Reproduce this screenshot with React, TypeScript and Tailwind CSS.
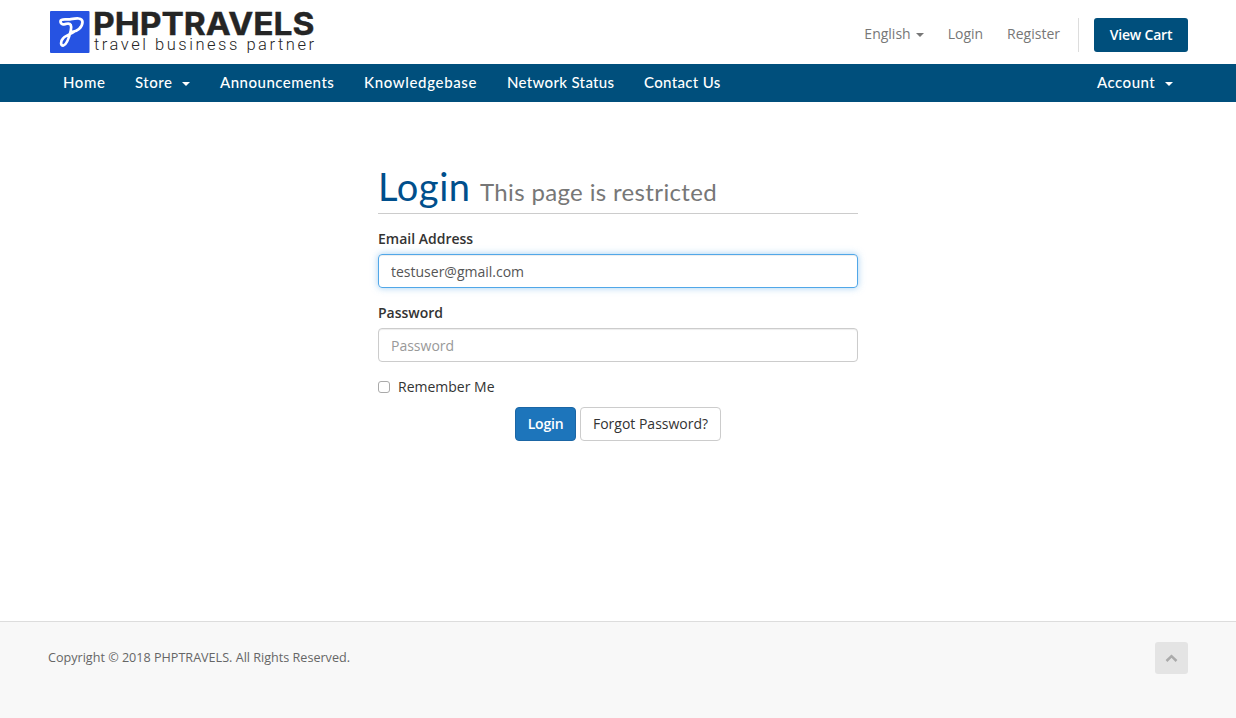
import React from 'react';

function Caret({ className = '' }: { className?: string }) {
  return (
    <svg className={className} width="8" height="4" viewBox="0 0 8 4" fill="currentColor" aria-hidden="true">
      <path d="M0 0H8L4 4Z" />
    </svg>
  );
}

function Logo() {
  return (
    <svg className="ml-0.5 shrink-0" width="270" height="60" viewBox="0 -10 270 60" role="img" aria-label="PHPTRAVELS travel business partner">
      <rect x="0" y="1" width="39.500" height="42" rx="1" fill="#2653e2" />
      <path
        d="M21 21.800C27 22.500 32.500 17 32.500 12C32.500 7 25 8.500 20 9.300C15 9.800 11 8.500 10.500 11C10.300 14.500 14 15 16.500 13.800C21 12.500 21.800 16 20.800 20.500C19.500 26 17.500 34.500 13.500 35.500C10.200 36 10.500 31 13 28.500C15.500 25.500 20 24.500 24.500 21.500"
        fill="none"
        stroke="#fff"
        strokeWidth="2.700"
        strokeLinecap="round"
        strokeLinejoin="round"
      />
      <text x="43" y="25" textLength="221.500" lengthAdjust="spacingAndGlyphs" fontFamily="Inter, sans-serif" fontWeight="700" fontSize="31.500" stroke="#252525" strokeWidth="0.400" fill="#252525">
        PHPTRAVELS
      </text>
      <text x="44" y="40" textLength="220" lengthAdjust="spacing" fontFamily="Roboto, sans-serif" fontWeight="300" fontSize="16.500" fill="#252525">
        travel business partner
      </text>
    </svg>
  );
}

const navItems = [
  { label: 'Home', box: 'w-[42px] mr-[30px]', spacing: 'tracking-[0.6px]' },
  { label: 'Store', box: 'w-[55px] mr-[30px]', spacing: 'tracking-[0.5px]', menu: true },
  { label: 'Announcements', box: 'w-[114px] mr-[30px]', spacing: 'tracking-[0.5px]' },
  { label: 'Knowledgebase', box: 'w-[113px] mr-[30px]', spacing: 'tracking-[0.65px]' },
  { label: 'Network Status', box: 'w-[107px] mr-[30px]', spacing: 'tracking-[0.33px]' },
  { label: 'Contact Us', box: 'w-[77px]', spacing: 'tracking-[0.35px]' },
];

export default function App() {
  return (
    <div className="flex h-[718px] w-[1236px] flex-col overflow-hidden bg-white font-['Open_Sans',sans-serif] text-sm leading-5 text-[#333]">
      <header className="flex h-16 shrink-0 justify-between px-12">
        <Logo />
        <div className="mt-[18px] flex h-[34px] items-center text-[#777]">
          <a className="flex items-center whitespace-nowrap pb-0.5">
            English
            <Caret className="ml-[5px] mt-px" />
          </a>
          <a className="ml-6 pb-0.5">Login</a>
          <a className="ml-6 pb-0.5">Register</a>
          <span className="ml-[18px] h-[34px] w-px bg-[#ddd]" />
          <button className="ml-[15px] h-[34px] w-[94px] rounded-[3px] bg-[#004f7c] text-sm font-semibold tracking-[-0.2px] text-white">View Cart</button>
        </div>
      </header>
      <nav className="flex h-[38px] shrink-0 items-center bg-[#004f7c] pl-[63px] pr-[63px] pb-0.5 font-['Lato',sans-serif] text-[15px] font-medium text-white">
        {navItems.map((item) => (
          <a key={item.label} className={`flex shrink-0 items-center justify-between whitespace-nowrap ${item.box} ${item.spacing}`}>
            {item.label}
            {item.menu && <Caret className="mt-[3px]" />}
          </a>
        ))}
        <a className="ml-auto flex w-[76px] items-center justify-between tracking-[0.5px]">
          Account
          <Caret className="mt-[3px]" />
        </a>
      </nav>
      <main className="ml-[378px] w-[480px] grow">
        <h1 className="mt-[64px] flex h-[48px] items-baseline whitespace-nowrap border-b border-[#ccc] font-['Lato',sans-serif] text-[38px] leading-10 text-[#004f8c]">
          <span className="w-[102px] tracking-[0.6px]">Login</span>
          <small className="text-2xl tracking-[0.35px] text-[#777]">This page is restricted</small>
        </h1>
        <form className="mt-[15px]" onSubmit={(e) => e.preventDefault()}>
          <label htmlFor="email" className="block h-[25px] font-semibold">Email Address</label>
          <input
            id="email"
            type="email"
            defaultValue="testuser@gmail.com"
            className="block h-[34px] w-full rounded border border-[#51a7e8] px-3 text-[#555] shadow-[inset_0_1px_1px_rgba(0,0,0,.075),0_0_7px_rgba(102,175,233,.6)] outline-none"
          />
          <label htmlFor="password" className="mt-[15px] block h-[25px] font-semibold">Password</label>
          <input
            id="password"
            type="password"
            placeholder="Password"
            className="block h-[34px] w-full rounded border border-[#ccc] px-3 shadow-[inset_0_1px_1px_rgba(0,0,0,.075)] outline-none placeholder:text-[#999]"
          />
          <label className="mt-[15px] flex h-5 items-center">
            <input type="checkbox" className="mr-2 h-3 w-3 appearance-none rounded-[3px] border border-[#aaa] bg-white" />
            Remember Me
          </label>
          <div className="mt-[10px] flex justify-center gap-1">
            <button className="h-[34px] w-[61px] rounded border border-[#1b66a5] bg-[#1d75bb] font-semibold tracking-[-0.2px] text-white">Login</button>
            <button className="h-[34px] w-[141px] whitespace-nowrap rounded border border-[#ccc] bg-white">Forgot Password?</button>
          </div>
        </form>
      </main>
      <footer className="flex h-[97px] shrink-0 justify-between border-t border-[#ddd] bg-[#f8f8f8] px-12 pt-5 text-[12.6px] text-[#666]">
        <p className="mt-[6px]">Copyright © 2018 PHPTRAVELS. All Rights Reserved.</p>
        <button aria-label="Back to top" className="flex h-8 w-[33px] items-center justify-center rounded-[3px] bg-[#e4e4e4]">
          <svg width="13" height="9" viewBox="0 0 13 9" fill="none" stroke="#aaa" strokeWidth="2.500">
            <path d="M1.500 7L6.500 2.200L11.500 7" />
          </svg>
        </button>
      </footer>
    </div>
  );
}
